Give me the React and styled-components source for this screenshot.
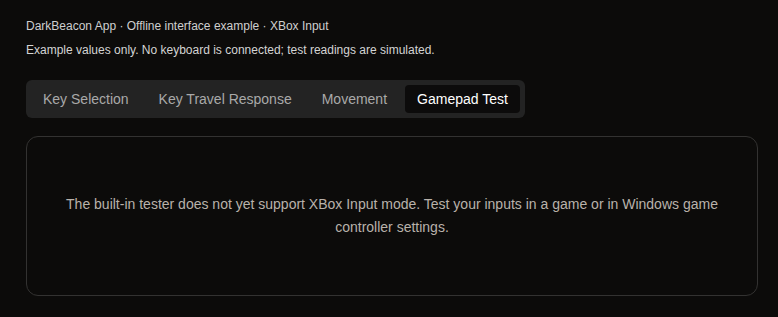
import React, { useState } from 'react'
import styled, { createGlobalStyle } from 'styled-components'

const GlobalStyle = createGlobalStyle`
  html, body {
    margin: 0;
    background-color: #0c0b0a;
    font-family: "Liberation Sans", Arial, sans-serif;
  }
`

const tabs = ['Key Selection', 'Key Travel Response', 'Movement', 'Gamepad Test']

function App() {
  const [active, setActive] = useState('Gamepad Test')

  return (
    <Page>
      <GlobalStyle />
      <Header>
        <Crumbs>DarkBeacon App · Offline interface example · XBox Input</Crumbs>
        <Note>Example values only. No keyboard is connected; test readings are simulated.</Note>
      </Header>
      <TabBar>
        {tabs.map(tab => (
          <Tab key={tab} active={tab === active} onClick={() => setActive(tab)}>
            {tab}
          </Tab>
        ))}
      </TabBar>
      <Card>
        <Message>
          The built-in tester does not yet support XBox Input mode. Test your inputs in a game or in Windows game
          controller settings.
        </Message>
      </Card>
    </Page>
  )
}

const Page = styled.div`
  padding: 18px 20px 20px 26px;
  color: #d0d0d0;
`

const Header = styled.div`
  display: flex;
  flex-direction: column;
  gap: 8px;
  margin-bottom: 22px;
`

const Crumbs = styled.div`
  font-size: 12px;
  line-height: 16px;
  color: #cfcfcf;
`

const Note = styled(Crumbs)`
  color: #d4d4d4;
`

const TabBar = styled.div`
  display: inline-flex;
  gap: 6px;
  padding: 5px;
  background-color: #232323;
  border-radius: 6px;
`

const Tab = styled.button`
  height: 28px;
  padding: 0 12px;
  border: none;
  border-radius: 4px;
  font-family: inherit;
  font-size: 14px;
  color: ${props => props.active ? '#ffffff' : '#a9a9a9'};
  background-color: ${props => props.active ? '#0c0b0b' : 'transparent'};
  cursor: pointer;
`

const Card = styled.div`
  margin-top: 18px;
  height: 160px;
  box-sizing: border-box;
  border: 1px solid #333231;
  border-radius: 12px;
  display: flex;
  align-items: center;
  justify-content: center;
  padding: 0 32px;
`

const Message = styled.p`
  margin: 0;
  text-align: center;
  font-size: 14px;
  line-height: 23px;
  color: #b9b2aa;
`

export default App
